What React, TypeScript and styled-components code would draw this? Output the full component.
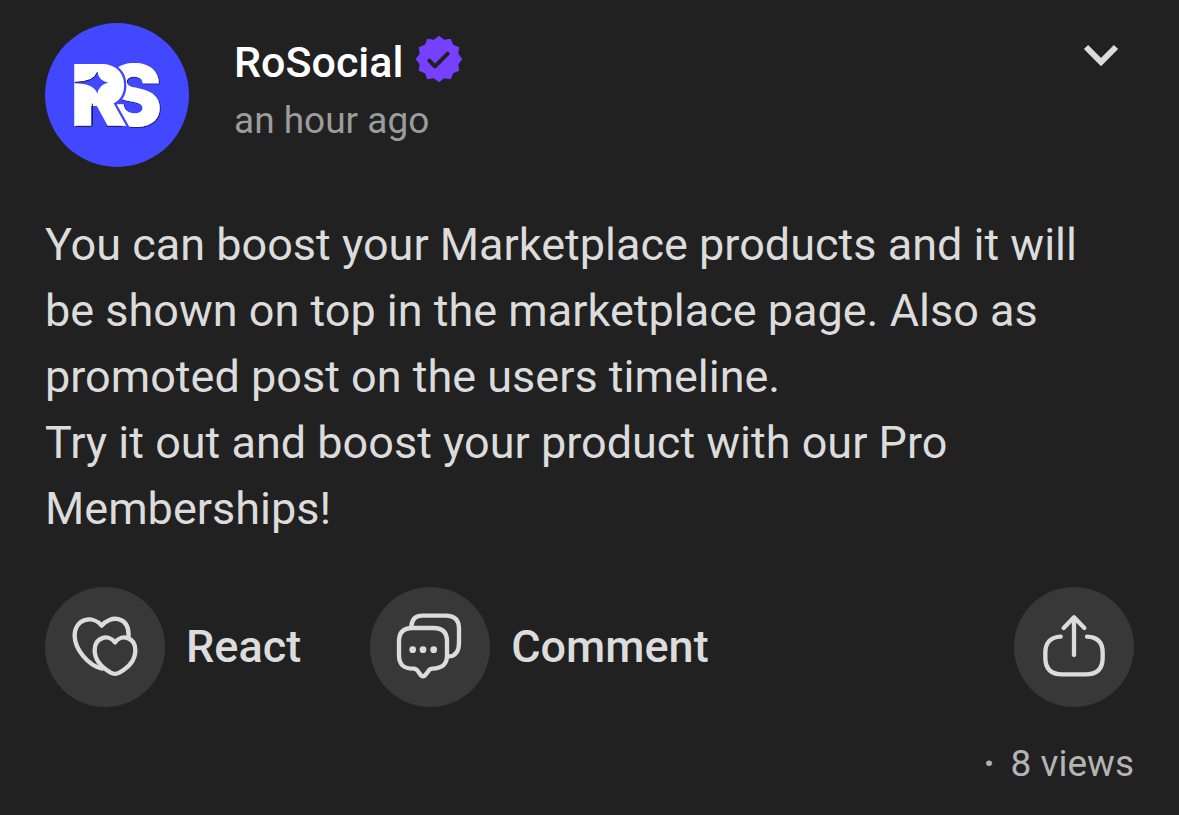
import React from "react";
import styled, { createGlobalStyle } from "styled-components";

const GlobalStyle = createGlobalStyle`
  * { box-sizing: border-box; }
  body { margin: 0; background: #212121; }
`;

const Post = styled.article`
  display: flex;
  flex-direction: column;
  padding: 23px 45px 30px;
  background: #212121;
  color: #dcdcdc;
  font-family: Roboto, "Liberation Sans", sans-serif;
`;

const Header = styled.header`
  display: flex;
  align-items: flex-start;
  gap: 45px;
`;

const Avatar = styled.svg`
  flex: none;
  width: 144px;
  height: 144px;
`;

const Author = styled.div`
  flex: 1;
  display: flex;
  flex-direction: column;
  gap: 6px;
  padding-top: 12px;
`;

const NameRow = styled.div`
  display: flex;
  align-items: center;
  gap: 12px;
`;

const Name = styled.a`
  color: #ffffff;
  font-size: 43px;
  font-weight: 500;
  line-height: 54px;
  text-decoration: none;
`;

const Badge = styled.svg`
  width: 48px;
  height: 48px;
  margin-bottom: 6px;
`;

const Time = styled.time`
  color: #9c9c9c;
  font-size: 37px;
  line-height: 52px;
`;

const MenuButton = styled.button`
  display: flex;
  padding: 8px;
  margin-top: 8px;
  border: 0;
  background: none;
  color: #dcdcdc;
  cursor: pointer;

  svg { width: 50px; height: 32px; }
`;

const Body = styled.p`
  margin: 45px 0;
  font-size: 45px;
  line-height: 66px;
`;

const Actions = styled.div`
  display: flex;
  align-items: center;
  gap: 69px;
`;

const ActionButton = styled.button<{ $end?: boolean }>`
  display: flex;
  align-items: center;
  gap: 21px;
  margin-left: ${(p) => (p.$end ? "auto" : "0")};
  padding: 0;
  border: 0;
  background: none;
  color: inherit;
  font-family: inherit;
  font-size: 45px;
  font-weight: 500;
  line-height: 60px;
  cursor: pointer;
`;

const Disc = styled.svg`
  width: 120px;
  height: 120px;
  border-radius: 50%;
  background: #383838;
  fill: none;
  stroke: currentColor;
  stroke-width: 13;
  stroke-linecap: round;
  stroke-linejoin: round;
`;

const Footer = styled.footer`
  display: flex;
  justify-content: flex-end;
  gap: 16px;
  margin-top: 31px;
  color: #b4b4b4;
  font-size: 37px;
  line-height: 52px;
`;

const Separator = styled.span`
  font-weight: 700;
`;

const badgePoints = Array.from({ length: 24 }, (_, i) => {
  const angle = (i * Math.PI) / 12;
  const radius = i % 2 === 0 ? 70 : 60;
  return `${(72 + radius * Math.cos(angle)).toFixed(1)},${(72 + radius * Math.sin(angle)).toFixed(1)}`;
}).join(" ");

const Monogram = styled.g`
  font-family: Inter, Roboto, sans-serif;
  font-weight: 900;
  font-size: 256px;
  fill: #ffffff;
  paint-order: stroke;
`;

const RSLogo = () => (
  <Avatar viewBox="30 24 432 432" role="img" aria-label="RoSocial">
    <defs>
      <filter id="letterShadow" x="-10%" y="-10%" width="130%" height="130%">
        <feDropShadow dx="2" dy="2" stdDeviation="1" floodColor="#101040" />
      </filter>
    </defs>
    <circle cx="246" cy="240" r="216" fill="#4148ff" />
    <Monogram>
      <text x="211" y="334" filter="url(#letterShadow)">S</text>
      <text x="106" y="333" stroke="#4148ff" strokeWidth="14">R</text>
      <path d="M160 180H222V262H160Z" />
    </Monogram>
    <path d="M172 266V332M122 334H170M215 334H262" fill="none" stroke="#15164f" strokeWidth="3" />
    <path d="M118 202Q178 200 187 170Q192 198 220 203Q192 208 187 236Q178 206 118 205Z" fill="#4148ff" />
    <path d="M120 202Q178 201 187 172" fill="none" stroke="#15164f" strokeWidth="3" />
  </Avatar>
);

export default function App() {
  return (
    <>
      <GlobalStyle />
      <Post>
        <Header>
          <RSLogo />
          <Author>
            <NameRow>
              <Name href="#">RoSocial</Name>
              <Badge viewBox="0 0 144 144" role="img" aria-label="Verified">
                <polygon points={badgePoints} fill="#7540ff" />
                <path d="M43 77L60 94L98 56" fill="none" stroke="#212121" strokeWidth="12" strokeLinecap="round" strokeLinejoin="round" />
              </Badge>
            </NameRow>
            <Time>an hour ago</Time>
          </Author>
          <MenuButton aria-label="Post options">
            <svg viewBox="0 0 50 32" fill="none" stroke="currentColor" strokeWidth="6">
              <path d="M10 8L25 23L40 8" />
            </svg>
          </MenuButton>
        </Header>
        <Body>
          You can boost your Marketplace products and it will be shown on top in the marketplace page. Also as promoted post on the users timeline.
          <br />
          Try it out and boost your product with our Pro Memberships!
        </Body>
        <Actions>
          <ActionButton>
            <Disc viewBox="30 21 360 360" aria-hidden="true">
              <path d="M281 169C282 105 225 106 200 137C173 104 119 116 119 167C119 207 160 257 202 266" />
              <path d="M240 187C220 161 179 171 179 211C179 246 208 267 227 278Q240 285 253 278C273 267 301 246 301 211C301 171 260 161 240 187Z" />
            </Disc>
            React
          </ActionButton>
          <ActionButton>
            <Disc viewBox="30 21 360 360" aria-hidden="true">
              <path d="M154 138C156 119 167 107 187 107H257C283 107 297 120 297 146V188C297 213 286 229 266 229" />
              <path d="M157 144H221C248 144 261 157 261 184V226C261 252 248 265 217 266Q209 266 204 275L196 285Q189 293 182 285L175 275Q169 266 161 266C130 266 117 254 117 226V184C117 157 130 144 157 144Z" />
              <g fill="currentColor" stroke="none">
                <circle cx="158" cy="209" r="10" />
                <circle cx="189" cy="209" r="10" />
                <circle cx="221" cy="209" r="10" />
              </g>
            </Disc>
            Comment
          </ActionButton>
          <ActionButton $end aria-label="Share">
            <Disc viewBox="42 21 360 360" aria-hidden="true">
              <path d="M222 225V112M191 144L222 112L253 144" />
              <path d="M182 170C152 171 136 188 136 218V233C136 268 154 283 187 283H257C291 283 308 267 308 233V218C308 188 292 171 261 170" />
            </Disc>
          </ActionButton>
        </Actions>
        <Footer>
          <Separator>·</Separator>
          <span>8 views</span>
        </Footer>
      </Post>
    </>
  );
}
